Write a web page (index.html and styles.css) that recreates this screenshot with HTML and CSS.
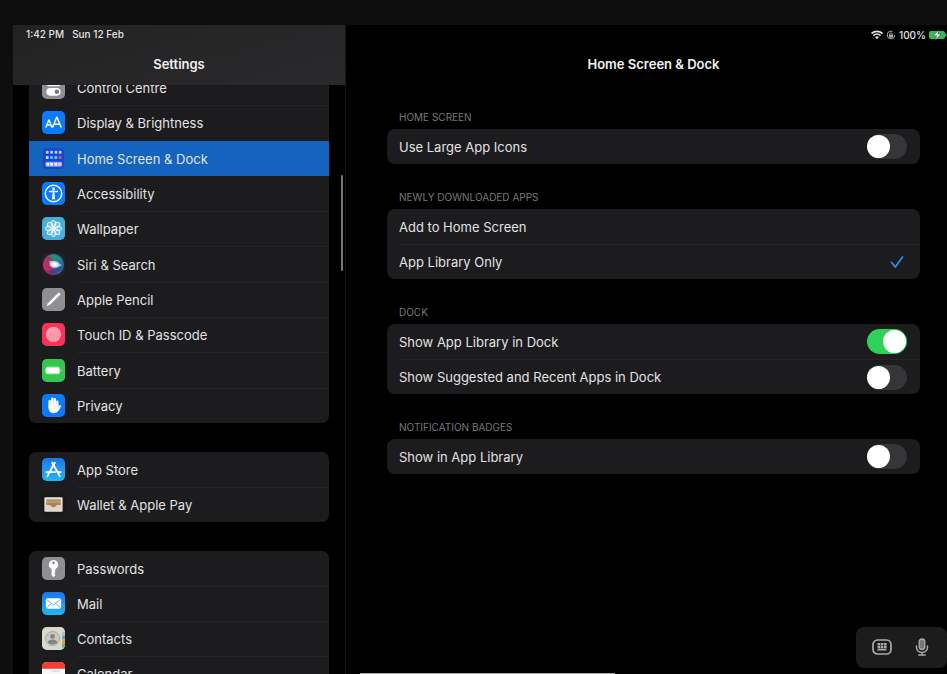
FILE: index.html
```html
<!DOCTYPE html>
<html lang="en">
<head>
<meta charset="utf-8">
<title>Settings</title>
<link rel="stylesheet" href="styles.css">
</head>
<body>
<div class="screen">
  <aside class="sidebar">
    <header class="sidebar-head">
      <div class="clock"><span>1:42 PM</span><span>Sun 12 Feb</span></div>
      <h1 class="title">Settings</h1>
    </header>
    <nav class="scroller" aria-label="Settings">
      <div class="list">
        <div class="group group-main">
          <a class="item" href="#">
            <svg class="icon" viewBox="0 0 24 24"><rect width="24" height="24" rx="5" fill="#8e8e93"/><rect x="5" y="4" width="14" height="6" rx="3" fill="none" stroke="#fff" stroke-width="1.500"/><rect x="4.500" y="12.500" width="15" height="8" rx="4" fill="#fff"/><circle cx="15.500" cy="16.500" r="2.300" fill="#77777b"/></svg>
            <span class="name">Control Centre</span></a>
          <a class="item" href="#">
            <svg class="icon" viewBox="0 0 24 24"><rect width="24" height="24" rx="5" fill="#0a7aff"/><path d="M4 17.200 7 9.500h.4l3 7.700M5 14.700h4.400M11 17.200 15.200 6.800h.5l4.300 10.400M12.500 13.900h6" fill="none" stroke="#fff" stroke-width="1.500"/></svg>
            <span class="name">Display &amp; Brightness</span></a>
          <a class="item selected" href="#" aria-current="page">
            <svg class="icon" viewBox="0 0 24 24"><rect x="1" y="1" width="22" height="22" rx="4" fill="#1746d2"/><g fill="#b9c8ff"><rect x="4" y="4" width="3" height="3" rx="1"/><rect x="8.500" y="4" width="3" height="3" rx="1"/><rect x="13" y="4" width="3" height="3" rx="1"/><rect x="17.500" y="4" width="3" height="3" rx="1"/></g><rect x="4" y="9.500" width="3" height="3" rx="1" fill="#d7dcff"/><rect x="8.500" y="9.500" width="3" height="3" rx="1" fill="#50cdf4"/><rect x="13" y="9.500" width="3" height="3" rx="1" fill="#58d3e8"/><rect x="17.500" y="9.500" width="3" height="3" rx="1" fill="#f34858"/><rect x="3.500" y="15.500" width="17.500" height="5" rx="1.500" fill="#829df3"/><g fill="#f4f1ff"><rect x="4.500" y="16.500" width="3" height="3" rx="1"/><rect x="8.500" y="16.500" width="3" height="3" rx="1"/><rect x="13" y="16.500" width="3" height="3" rx="1"/></g><rect x="17" y="16.500" width="3" height="3" rx="1" fill="#ffc4b9"/></svg>
            <span class="name">Home Screen &amp; Dock</span></a>
          <a class="item" href="#">
            <svg class="icon" viewBox="0 0 24 24"><rect width="24" height="24" rx="5" fill="#0a7aff"/><circle cx="12" cy="12" r="8.600" fill="none" stroke="#fff" stroke-width="1.500"/><circle cx="12" cy="7.300" r="1.500" fill="#fff"/><path d="M8 10h8M12 10v4M11.300 17.500l.4-5M12.700 17.500l-.4-5" stroke="#fff" stroke-width="1.600" stroke-linecap="round"/></svg>
            <span class="name">Accessibility</span></a>
          <a class="item" href="#">
            <svg class="icon" viewBox="0 0 24 24"><rect width="24" height="24" rx="5" fill="#45aedb"/><g fill="#ffffff44" stroke="#e4f7ff" stroke-width="1"><ellipse cx="12" cy="6.800" rx="2.300" ry="3.200"/><ellipse cx="12" cy="17.200" rx="2.300" ry="3.200"/><ellipse cx="6.800" cy="12" rx="3.200" ry="2.300"/><ellipse cx="17.200" cy="12" rx="3.200" ry="2.300"/><g transform="rotate(45 12 12)"><ellipse cx="12" cy="6.800" rx="2.300" ry="3.200"/><ellipse cx="12" cy="17.200" rx="2.300" ry="3.200"/><ellipse cx="6.800" cy="12" rx="3.200" ry="2.300"/><ellipse cx="17.200" cy="12" rx="3.200" ry="2.300"/></g></g><circle cx="12" cy="12" r="2.200" fill="#e4f7ff"/></svg>
            <span class="name">Wallpaper</span></a>
          <a class="item" href="#">
            <svg class="icon" viewBox="0 0 24 24"><defs><linearGradient id="siri" x1="0" y1=".7" x2="1" y2=".4"><stop offset="0" stop-color="#e0255e"/><stop offset=".4" stop-color="#913769"/><stop offset=".65" stop-color="#27868a"/><stop offset="1" stop-color="#2260b5"/></linearGradient><radialGradient id="glow"><stop offset="0" stop-color="#fff"/><stop offset=".45" stop-color="#f0f2ff" stop-opacity=".9"/><stop offset="1" stop-color="#fff" stop-opacity="0"/></radialGradient></defs><rect width="24" height="24" rx="5" fill="#202329"/><circle cx="12" cy="12" r="11" fill="url(#siri)"/><path d="M6 4C12 0 20 4 21 9c-5-3-9-4-15-5z" fill="#23957b" opacity=".8"/><path d="M5 19c6-1 10-3 17-6-1 7-9 12-17 6z" fill="#343b99" opacity=".7"/><path d="M7 8c4 0 9 1 14 5-5 2-9 2-12 0z" fill="#fff" opacity=".45"/><ellipse cx="13" cy="12" rx="6" ry="4.500" fill="url(#glow)"/></svg>
            <span class="name">Siri &amp; Search</span></a>
          <a class="item" href="#">
            <svg class="icon" viewBox="0 0 24 24"><rect width="24" height="24" rx="5" fill="#8e8e93"/><path d="m5 19 1.200-3L17.500 4.500l2 2L8 17.800z" fill="#fff"/></svg>
            <span class="name">Apple Pencil</span></a>
          <a class="item" href="#">
            <svg class="icon" viewBox="0 0 24 24"><rect width="24" height="24" rx="5" fill="#fc3158"/><circle cx="12" cy="12" r="8" fill="#ff8b9f"/><g fill="none" stroke="#ffb0bc" stroke-width="1" stroke-linecap="round"><path d="M5 9.500C8 3 16 3 19 9.500M4.500 13c0-9 14-9 15 0M6 16c.5-2-.5-7 4-8 4-1 7 2 7 6 0 2-1 4-1 4M8.500 18c1-3-.5-7 3-8 4 0 3.500 5 2 9M11.500 13c0 2-.2 4-1 6.500"/></g></svg>
            <span class="name">Touch ID &amp; Passcode</span></a>
          <a class="item" href="#">
            <svg class="icon" viewBox="0 0 24 24"><rect width="24" height="24" rx="5" fill="#34c74f"/><rect x="4" y="8.500" width="14.500" height="7" rx="2" fill="#fff" stroke="#a6efb3"/><path d="M20.500 10.500q1.500 1.500 0 3z" fill="#d8ffe0"/></svg>
            <span class="name">Battery</span></a>
          <a class="item" href="#">
            <svg class="icon" viewBox="0 0 24 24"><rect width="24" height="24" rx="5" fill="#0a7aff"/><path d="M8 14V7.500M10.700 12V5M13.400 12V5.500M16 13V8" stroke="#fff" stroke-width="2.500" stroke-linecap="round"/><path d="M6.900 11h10.200v2.500l1.300-1.700c.7-.8 1.900 0 1.400 1-1 2-2.500 6.900-7.300 7.200-3.900 0-5.600-2.500-5.600-6z" fill="#fff"/></svg>
            <span class="name">Privacy</span></a>
        </div>
        <div class="group">
          <a class="item" href="#">
            <svg class="icon" viewBox="0 0 24 24"><defs><linearGradient id="blue" x2="0" y2="1"><stop stop-color="#1d75ec"/><stop offset="1" stop-color="#22b7f5"/></linearGradient></defs><rect width="24" height="24" rx="5" fill="url(#blue)"/><path d="m13.300 5-6.700 12M10.700 5l6.800 12M4.500 14.700h9.300M16.600 14.700h3M6 18.200l-.4.800M18 18l.5.900" fill="none" stroke="#fff" stroke-width="2" stroke-linecap="round"/></svg>
            <span class="name">App Store</span></a>
          <a class="item" href="#">
            <svg class="icon" viewBox="0 0 24 24"><rect width="24" height="24" rx="5" fill="#19191b"/><rect x="2.500" y="4.500" width="19" height="15" rx="1" fill="#e9e3d5"/><path d="M4.500 6.500h15v3h-15z" fill="#9a9b76"/><path d="M4.500 8.500h15v3h-15z" fill="#b3a355"/><path d="M4.500 10.500h15v2.500l-5 2h-5l-5-2z" fill="#b9795a"/><path d="M3.500 12.500h4.800c.8 0 1.400 2.500 3.700 2.500s2.900-2.500 3.700-2.500h4.800v6h-17z" fill="#ded8ca"/></svg>
            <span class="name">Wallet &amp; Apple Pay</span></a>
        </div>
        <div class="group">
          <a class="item" href="#">
            <svg class="icon" viewBox="0 0 24 24"><rect width="24" height="24" rx="5" fill="#8e8e93"/><path fill-rule="evenodd" d="M12 3a5 5 0 0 0-2 9.500V19l2 2 2.200-2.200-1.400-1.500 1.400-1.600-1.200-1.400 1-.8v-1A5 5 0 0 0 12 3zm0 1.800a1.400 1.400 0 1 1 0 2.800 1.400 1.400 0 0 1 0-2.800z" fill="#fff"/></svg>
            <span class="name">Passwords</span></a>
          <a class="item" href="#">
            <svg class="icon" viewBox="0 0 24 24"><rect width="24" height="24" rx="5" fill="url(#blue)"/><rect x="4" y="6.500" width="16" height="11" rx="2" fill="#fff"/><path d="m5 8 7 5.500L19 8M5 16.500l4.500-4.500m5 0 4.500 4.500" fill="none" stroke="#55a8f0" stroke-width="1"/></svg>
            <span class="name">Mail</span></a>
          <a class="item" href="#">
            <svg class="icon" viewBox="0 0 24 24"><rect width="24" height="24" rx="5" fill="#d8d8cc"/><path d="M21 5h2q1 0 1 1v3h-3z" fill="#b9bbb2"/><path d="M21 9h3v4h-3z" fill="#49a7d5"/><path d="M21 13h3v4h-3z" fill="#f09b35"/><path d="M21 17h3v2q0 2-3 3z" fill="#65b86a"/><circle cx="11" cy="12" r="7.300" fill="#c9c9bf" stroke="#a5a59c"/><circle cx="11" cy="9.800" r="2.500" fill="#85857e"/><path d="M6 16c1-4 9-4 10 0-2 3-8 3-10 0z" fill="#85857e"/></svg>
            <span class="name">Contacts</span></a>
          <a class="item" href="#">
            <svg class="icon" viewBox="0 0 24 24"><rect width="24" height="24" rx="5" fill="#f7f7f7"/><path d="M0 7V5q0-5 5-5h14q5 0 5 5v2z" fill="#f43b36"/><path d="M10 9.500h9" stroke="#ccc" stroke-width="1"/></svg>
            <span class="name">Calendar</span></a>
        </div>
      </div>
      <span class="scrollbar"></span>
    </nav>
  </aside>
  <main class="detail">
    <div class="status">
      <svg class="wifi" viewBox="0 0 12 10"><path d="M.5 3.500a8 8 0 0 1 11 0M2.500 5.600a5 5 0 0 1 7 0" fill="none" stroke="#ddd" stroke-width="1.800"/><path d="m6 9.300-2-2.200q2-1.600 4 0z" fill="#ddd"/></svg>
      <svg class="lock" viewBox="0 0 10 10"><circle cx="5" cy="5" r="3.800" fill="none" stroke="#aaa" stroke-dasharray="19 5"/><rect x="3" y="4.600" width="4" height="3" fill="#aaa"/><path d="M3.800 5V3.500q1.200-1.500 2.400 0V5" fill="none" stroke="#aaa" stroke-width=".8"/></svg>
      <span>100%</span>
      <svg class="battery" viewBox="0 0 18 10"><rect y="1" width="16" height="8" rx="2" fill="#35ba55"/><path d="M16.800 3.500v3" stroke="#35ba55" stroke-width="1.500"/><path d="M9.500 0 4.500 5.800h3L6.500 10l5.500-5.900H8.800z" fill="#fff" stroke="#174f25" stroke-width=".5"/></svg>
    </div>
    <div class="content">
      <h2 class="title">Home Screen &amp; Dock</h2>
      <section class="section">
        <h3 class="caption">HOME SCREEN</h3>
        <div class="card">
          <label class="option"><span>Use Large App Icons</span><input class="switch" type="checkbox"></label>
        </div>
      </section>
      <section class="section">
        <h3 class="caption">NEWLY DOWNLOADED APPS</h3>
        <div class="card">
          <label class="option"><span>Add to Home Screen</span><input class="choice" type="radio" name="downloads"></label>
          <label class="option"><span>App Library Only</span><input class="choice" type="radio" name="downloads" checked><svg class="check" viewBox="0 0 14 14"><path d="m1.500 7.500 3.800 4.500L12.500 2" fill="none" stroke="#2f8de0" stroke-width="1.800" stroke-linecap="round" stroke-linejoin="round"/></svg></label>
        </div>
      </section>
      <section class="section">
        <h3 class="caption">DOCK</h3>
        <div class="card">
          <label class="option"><span>Show App Library in Dock</span><input class="switch" type="checkbox" checked></label>
          <label class="option"><span>Show Suggested and Recent Apps in Dock</span><input class="switch" type="checkbox"></label>
        </div>
      </section>
      <section class="section">
        <h3 class="caption">NOTIFICATION BADGES</h3>
        <div class="card">
          <label class="option"><span>Show in App Library</span><input class="switch" type="checkbox"></label>
        </div>
      </section>
    </div>
    <div class="keybar">
      <button class="key" type="button" aria-label="Keyboard"><svg viewBox="0 0 20 20"><rect x="1" y="3" width="18" height="14" rx="4.500" fill="none" stroke="#aaa" stroke-width="1.700"/><g fill="#aaa"><rect x="5.500" y="6" width="2.600" height="2.500"/><rect x="8.700" y="6" width="2.600" height="2.500"/><rect x="12" y="6" width="2.600" height="2.500"/><rect x="5.500" y="9" width="2.600" height="2.300"/><rect x="8.700" y="9" width="2.600" height="2.300"/><rect x="12" y="9" width="2.600" height="2.300"/><rect x="5.500" y="11.800" width="9" height="1.700"/></g></svg></button>
      <button class="key" type="button" aria-label="Dictate"><svg viewBox="0 0 20 20"><rect x="7.200" y="2" width="5.600" height="10.500" rx="2.800" fill="#77777a" stroke="#aaa" stroke-width="1.300"/><path d="M4.500 9v1.500a5.500 5 0 0 0 11 0V9M10 15.500V18M6.800 18h6.400" fill="none" stroke="#aaa" stroke-width="1.400" stroke-linecap="round"/></svg></button>
    </div>
    <span class="home-bar"></span>
  </main>
</div>
</body>
</html>
```
FILE: styles.css
```css
* { box-sizing: border-box; }

body {
  margin: 0;
  background: #0e0e0e;
  color: #e2e2e3;
  font: 13px/16px Inter, "Liberation Sans", sans-serif;
}

h1, h2, h3 { margin: 0; }

.screen {
  display: flex;
  height: 100vh;
  padding: 25px 0 0 13px;
  overflow: hidden;
}

.sidebar {
  display: flex;
  flex-direction: column;
  flex: 0 0 333px;
  border-right: 1px solid #171718;
  background: #000;
}

.sidebar-head {
  flex: none;
  height: 60px;
  background: linear-gradient(165deg, #222223, #2a2a2c);
}

.clock {
  display: flex;
  gap: 8px;
  padding: 3px 13px 0;
  font-size: 10px;
  line-height: 13px;
  font-weight: 500;
}

.title {
  font-size: 13px;
  line-height: 16px;
  font-weight: 600;
  text-align: center;
  color: #f0f0f0;
}

.sidebar-head .title { padding-top: 15px; }

.scroller {
  position: relative;
  flex: 1;
  min-height: 0;
  overflow: hidden;
}

/* The list rests part-way through its scroll range. */
.list {
  display: flex;
  flex-direction: column;
  gap: 29px;
  margin: -15px 16px 0;
}

.group {
  display: grid;
  grid-auto-rows: minmax(35px, 1fr);
  flex: none;
  border-radius: 7px;
  background: #1c1c1e;
  overflow: hidden;
}

.group-main { min-height: 353px; }

.item {
  display: flex;
  align-items: center;
  gap: 12px;
  padding-left: 13px;
  color: inherit;
  text-decoration: none;
}

.icon { flex: none; width: 23px; height: 23px; }

.name {
  display: flex;
  align-items: center;
  flex: 1;
  align-self: stretch;
  border-top: 1px solid #242426;
}

.item:first-child .name,
.selected .name,
.selected + .item .name { border-top-color: transparent; }

.selected { background: #1464bf; }

.scrollbar {
  position: absolute;
  top: 90px;
  right: 2px;
  width: 2px;
  height: 96px;
  border-radius: 1px;
  background: #77777a;
}

.detail {
  position: relative;
  flex: 1;
  min-width: 0;
  background: #000;
}

.status {
  display: flex;
  justify-content: flex-end;
  align-items: center;
  gap: 3px;
  height: 19px;
  font-size: 10px;
  font-weight: 500;
}

.wifi { width: 12px; height: 10px; }
.lock { width: 10px; height: 10px; }
.battery { width: 18px; height: 10px; }

.content { padding: 12px 27px 0 41px; }

.section { margin-top: 26px; }
.title + .section { margin-top: 38px; }

.caption {
  padding: 0 12px 5px;
  font-size: 10px;
  line-height: 14px;
  font-weight: 400;
  color: #77777b;
}

.card {
  border-radius: 8px;
  background: #1c1c1e;
}

.option {
  display: flex;
  align-items: center;
  justify-content: space-between;
  height: 35px;
  margin-left: 12px;
  padding-right: 13px;
}

.option + .option { border-top: 1px solid #262629; }

.switch {
  appearance: none;
  display: flex;
  width: 40px;
  height: 25px;
  margin: 0;
  padding: 1px 0;
  border-radius: 13px;
  background: #363638;
}

.switch::before {
  content: "";
  width: 23px;
  height: 23px;
  border-radius: 50%;
  background: #fff;
}

.switch:checked {
  justify-content: flex-end;
  padding-right: 1px;
  background: #30d158;
}

.choice {
  appearance: none;
  width: 0;
  height: 0;
  margin: 0 0 0 auto;
}

.check { width: 14px; height: 14px; margin-right: 3px; }

.keybar {
  position: absolute;
  right: 0;
  bottom: 6px;
  display: flex;
  gap: 20px;
  padding: 10px 15px 11px 16px;
  border-radius: 8px;
  background: #1c1c1d;
}

.key {
  width: 20px;
  height: 20px;
  padding: 0;
  border: 0;
  background: none;
}

.key svg { display: block; width: 20px; height: 20px; }

.home-bar {
  position: absolute;
  left: 14px;
  bottom: 0;
  width: 255px;
  height: 1px;
  background: #a8a8a8;
}
```
